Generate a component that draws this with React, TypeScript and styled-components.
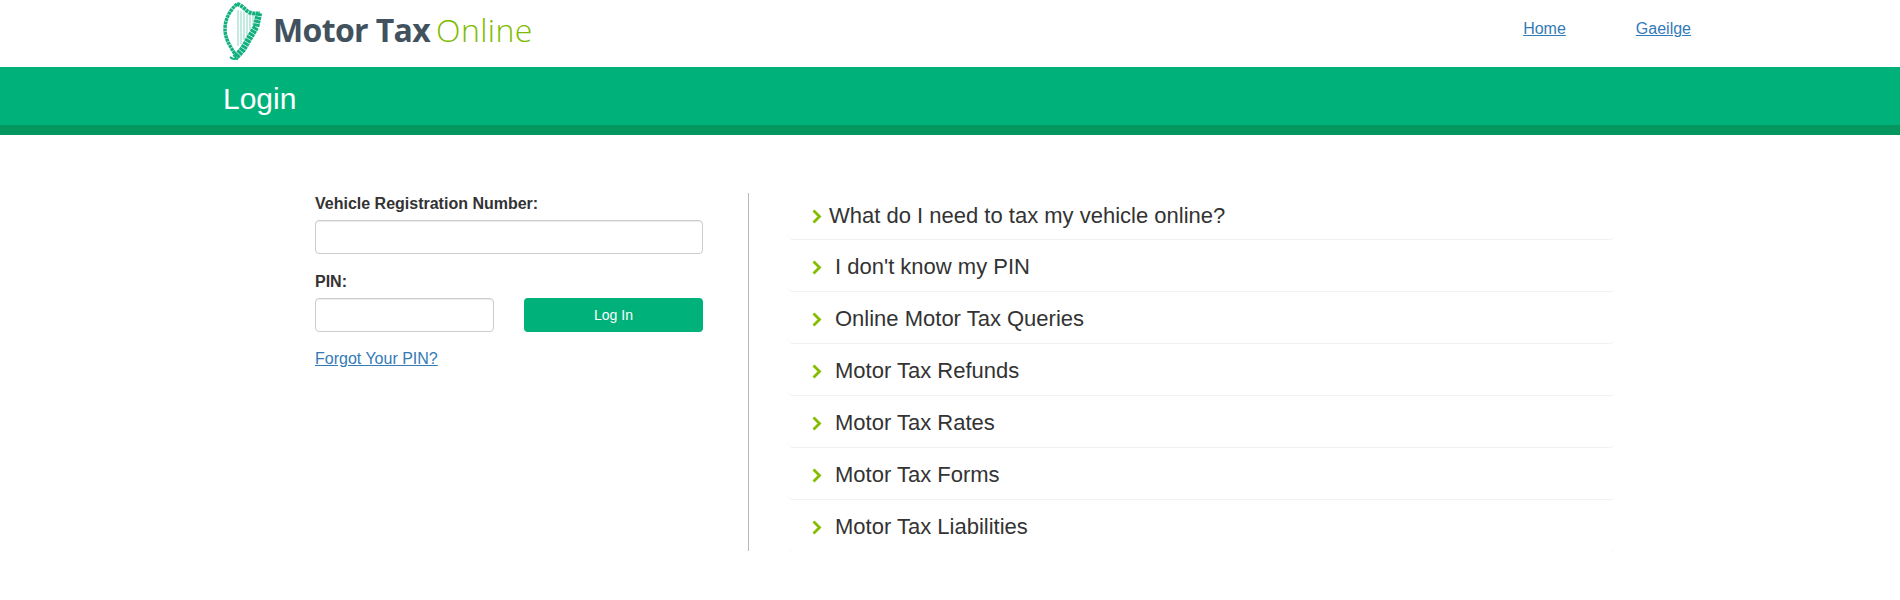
import React from "react";
import styled, { createGlobalStyle } from "styled-components";

const Global = createGlobalStyle`
  html, body { margin: 0; padding: 0; background: #fff; }
  body { font-family: "Liberation Sans", Arial, sans-serif; color: #333; font-size: 14px; }
`;

const Header = styled.header`
  height: 67px;
  padding: 0 209px 0 223px;
  display: flex;
  align-items: flex-start;
  justify-content: space-between;
  box-sizing: border-box;
`;
const Brand = styled.div`
  display: flex;
  align-items: flex-start;
  padding-top: 2px;
`;
const BrandName = styled.div`
  margin: 8px 0 0 10px;
  font-family: "Open Sans", sans-serif;
  font-size: 32px;
  line-height: 40px;
  white-space: nowrap;
  letter-spacing: -0.65px;
`;
const BrandStrong = styled.span`
  font-weight: 700;
  color: #41525e;
`;
const BrandLight = styled.span`
  margin-left: 6px;
  font-weight: 300;
  color: #7dbb00;
  letter-spacing: 0.4px;
`;
const TopNav = styled.nav`
  display: flex;
  gap: 70px;
  padding-top: 18px;
`;
const Link = styled.a`
  color: #337ab7;
  text-decoration: underline;
  font-size: 16px;
  line-height: 22px;
  display: block;
`;
const Band = styled.div`
  height: 68px;
  box-sizing: border-box;
  background: #00b279;
  border-bottom: 10px solid #03975f;
  padding-left: 223px;
`;
const Title = styled.h1`
  margin: 0;
  font-size: 30px;
  font-weight: 400;
  line-height: 64px;
  color: #fff;
`;
const Main = styled.main`
  display: flex;
  padding: 58px 0 0 315px;
`;
const LoginForm = styled.form`
  width: 388px;
  padding-top: 1px;
`;
const Label = styled.label`
  display: block;
  font-weight: 700;
  font-size: 16px;
  line-height: 20px;
  color: #333;
  margin-bottom: 6px;
`;
const Field = styled.input<{ $width: number }>`
  display: block;
  box-sizing: border-box;
  width: ${(p) => p.$width}px;
  height: 34px;
  border: 1px solid #ccc;
  border-radius: 4px;
  background: #fff;
  box-shadow: inset 0 1px 1px rgba(0, 0, 0, 0.075);
  padding: 6px 12px;
`;
const RegField = styled.div`
  margin-bottom: 18px;
`;
const PinRow = styled.div`
  display: flex;
  justify-content: space-between;
  margin-bottom: 16px;
`;
const LoginButton = styled.button`
  width: 179px;
  height: 34px;
  border: 0;
  border-radius: 4px;
  background: #00b279;
  color: #fff;
  font-family: inherit;
  font-size: 14px;
  padding: 0;
`;
const Divider = styled.div`
  width: 1px;
  height: 358px;
  background: #b9b9b9;
  margin-left: 45px;
`;
const Faq = styled.ul`
  list-style: none;
  margin: 0 0 0 40px;
  padding: 0;
  width: 825px;
`;
const FaqRow = styled.li<{ $first?: boolean }>`
  height: ${(p) => (p.$first ? 46 : 52)}px;
  box-sizing: border-box;
  border-radius: 4px;
  box-shadow: 0 1px 1px rgba(0, 0, 0, 0.06);
  display: flex;
  align-items: flex-end;
  padding: 0 0 ${(p) => (p.$first ? 9 : 10)}px 23px;
  font-size: 22px;
  line-height: 28px;
  color: #333;
`;
const FaqChevron = styled.svg`
  width: 10px;
  height: 15px;
  flex: none;
  margin-bottom: 6px;
`;
const FaqText = styled.span<{ $first?: boolean }>`
  margin-left: ${(p) => (p.$first ? 7 : 13)}px;
  white-space: nowrap;
`;

const Harp = () => (
  <svg width="40" height="58" viewBox="0 0 40 58" fill="none" stroke="#12b07f">
    <path d="M15 8v36M18 9v33M21 10v28M24 12v22M27 13v15M30 14v9" strokeWidth="1" opacity=".5" />
    <path d="M14 2c4 1 7 4 10 7 4 3 9 3 13 2" strokeWidth="4" strokeDasharray="3 .6" />
    <path d="M36 11 33 25 20 47l-8 9" strokeWidth="6.5" strokeDasharray="3 .6" />
    <path d="M14 2C7 8 2 17 2 27c0 9 4 16 12 28" strokeWidth="3.5" strokeDasharray="3 .5" />
    <path d="M7 55c2 2 5 2.500 8 1" strokeWidth="2" />
  </svg>
);

const items = [
  "What do I need to tax my vehicle online?",
  "I don't know my PIN",
  "Online Motor Tax Queries",
  "Motor Tax Refunds",
  "Motor Tax Rates",
  "Motor Tax Forms",
  "Motor Tax Liabilities",
];

export default function App() {
  return (
    <>
      <Global />
      <Header>
        <Brand>
          <Harp />
          <BrandName>
            <BrandStrong>Motor Tax</BrandStrong>
            <BrandLight>Online</BrandLight>
          </BrandName>
        </Brand>
        <TopNav>
          <Link href="#">Home</Link>
          <Link href="#">Gaeilge</Link>
        </TopNav>
      </Header>
      <Band>
        <Title>Login</Title>
      </Band>
      <Main>
        <LoginForm>
          <RegField>
            <Label>Vehicle Registration Number:</Label>
            <Field $width={388} />
          </RegField>
          <Label>PIN:</Label>
          <PinRow>
            <Field $width={179} />
            <LoginButton type="button">Log In</LoginButton>
          </PinRow>
          <Link href="#">Forgot Your PIN?</Link>
        </LoginForm>
        <Divider />
        <Faq>
          {items.map((t, i) => (
            <FaqRow key={t} $first={i === 0}>
              <FaqChevron viewBox="0 0 10 15">
                <path d="M1.5 1.500 7.500 7.500l-6 6" fill="none" stroke="#84bd00" strokeWidth="2.800" />
              </FaqChevron>
              <FaqText $first={i === 0}>{t}</FaqText>
            </FaqRow>
          ))}
        </Faq>
      </Main>
    </>
  );
}
